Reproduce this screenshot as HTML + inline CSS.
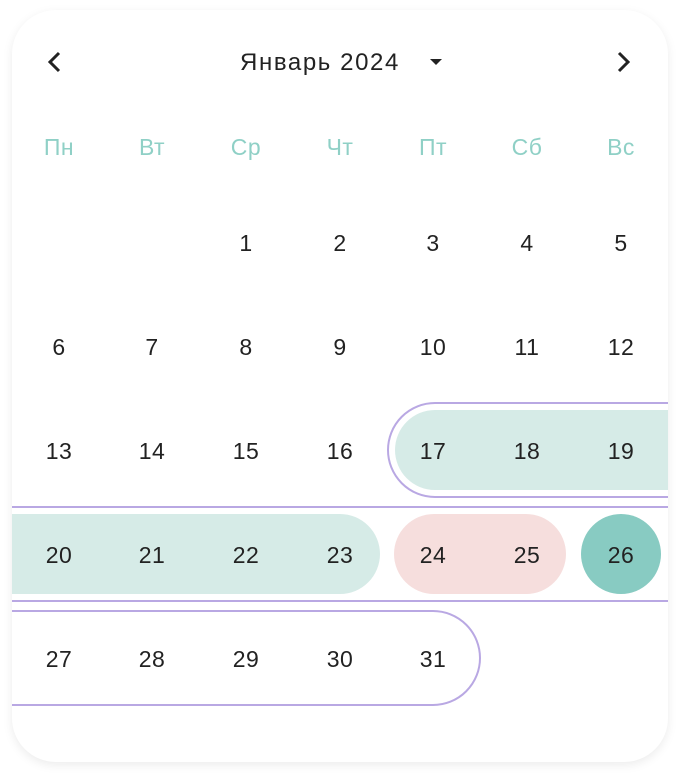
<!DOCTYPE html>
<html><head><meta charset="utf-8"><style>
body{margin:0;width:680px;height:776px;background:#fff;font-family:"Liberation Sans",sans-serif;position:relative;overflow:hidden}
.card{position:absolute;left:12px;top:10px;width:656px;height:752px;border-radius:44px;background:#fff;box-shadow:0 3px 10px rgba(0,0,0,0.08);overflow:hidden}
.t{position:absolute;width:80px;margin-left:-40px;text-align:center;font-size:23px;color:#222;line-height:30px;margin-top:-15px;letter-spacing:0.5px}
.w{color:#8fd0c6}
</style></head><body>
<div class="card">
<svg width="656" height="752" style="position:absolute;left:0;top:0">
<path d="M47 43 L38 52 L47 61" fill="none" stroke="#222" stroke-width="3"/>
<path d="M607 43 L616 52 L607 61" fill="none" stroke="#222" stroke-width="3"/>
<path d="M418 49 L430 49 L424 55 Z" fill="#222"/>
<path d="M423 400 H656 V480 H423 A40 40 0 0 1 423 400 Z" fill="#d6ebe7"/>
<path d="M0 504 H328 A40 40 0 0 1 328 584 H0 Z" fill="#d6ebe7"/>
<rect x="382" y="504" width="172" height="80" rx="40" fill="#f6dedd"/>
<ellipse cx="609" cy="544" rx="40" ry="40" fill="#88cbc2"/>
<path d="M656 393 H423 A47 47 0 0 0 423 487 H656" fill="none" stroke="#b9a8e3" stroke-width="2"/>
<path d="M0 497 H656 M0 591 H656" fill="none" stroke="#b9a8e3" stroke-width="2"/>
<path d="M0 601 H421 A47 47 0 0 1 421 695 H0" fill="none" stroke="#b9a8e3" stroke-width="2"/>
</svg>
</div>
<div class="t" style="left:320px;top:63px;width:220px;margin-left:-110px;font-size:24px;letter-spacing:1.6px">Январь 2024</div>
<div id="g"></div>
<script>
var xs=[59,152,246,340,433,527,621],ys=[243,347,451,555,659],h='';
['Пн','Вт','Ср','Чт','Пт','Сб','Вс'].forEach(function(d,i){h+='<div class="t w" style="left:'+xs[i]+'px;top:147px">'+d+'</div>'});
for(var n=1;n<=31;n++){var p=n+1,r=Math.floor(p/7),c=p%7;h+='<div class="t" style="left:'+xs[c]+'px;top:'+ys[r]+'px">'+n+'</div>'}
document.getElementById('g').innerHTML=h;
</script>
</body></html>
